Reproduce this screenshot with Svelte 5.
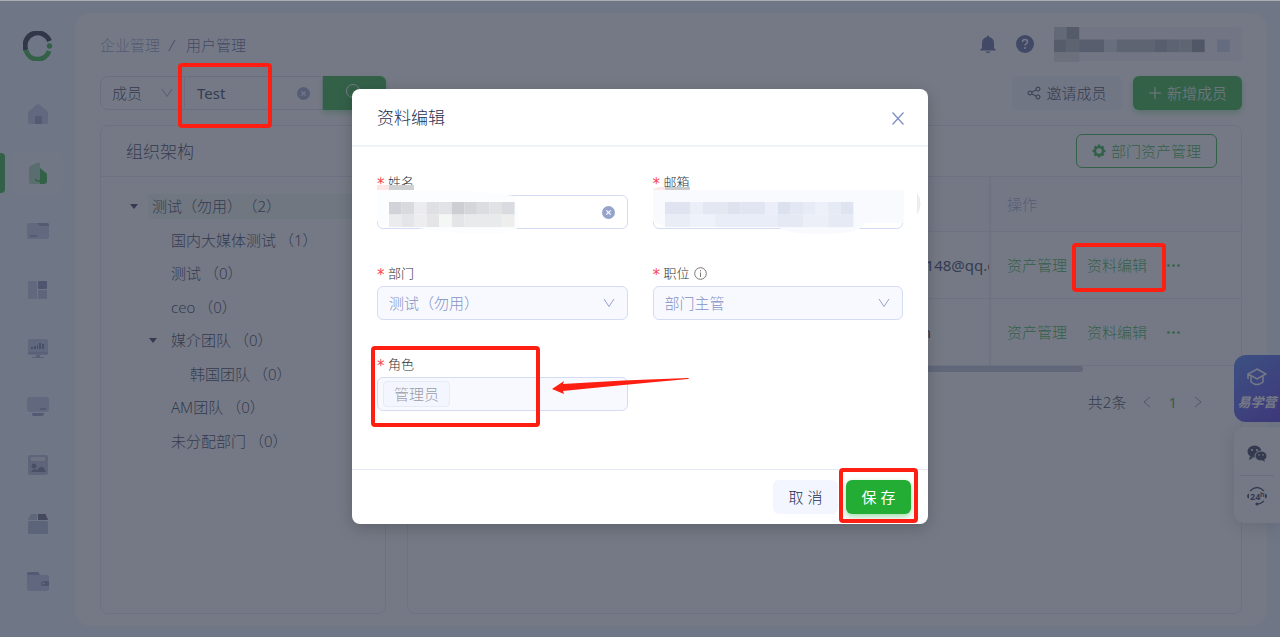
<script lang="ts">
	type Node = { name: string; count: number; level: number; open?: boolean; active?: boolean };
	type Block = [number, number, number, string];

	const tree: Node[] = [
		{ name: '测试（勿用）', count: 2, level: 0, open: true, active: true },
		{ name: '国内大媒体测试', count: 1, level: 1 },
		{ name: '测试', count: 0, level: 1 },
		{ name: 'ceo', count: 0, level: 1 },
		{ name: '媒介团队', count: 0, level: 1, open: true },
		{ name: '韩国团队', count: 0, level: 2 },
		{ name: 'AM团队', count: 0, level: 1 },
		{ name: '未分配部门', count: 0, level: 1 }
	];

	const menu = ['首页', '企业', '项目', '看板', '数据', '设备', '素材', '资产', '钱包'];
	const emails = ['0148@qq.c', 'm'];

	// column, row, width in cells, colour
	const userBlocks: Block[] = [
		[0, 0, 1, '#c3c9cc'], [1, 0, 1, '#949ba2'],
		[0, 1, 1, '#989ea4'], [1, 1, 1, '#b0b5bc'], [2, 1, 2, '#a0a5b2'], [4, 1, 1, '#d8dbe6'],
		[5, 1, 3, '#b4b9c0'], [8, 1, 1, '#9fa5b2'], [9, 1, 1, '#b0b5c0'], [10, 1, 1, '#b8bdc6'],
		[11, 1, 1, '#888d9b'], [13, 1, 1, '#ccd3ec'],
		[0, 2, 2, '#dcdfe2']
	];
	const nameBlocks: Block[] = [
		[0, 0, 1, '#d2d3d8'], [1, 0, 1, '#d9dade'], [2, 0, 1, '#ececef'], [3, 0, 1, '#dfe0e3'],
		[4, 0, 1, '#e1e3e7'], [5, 0, 1, '#cdced3'], [6, 0, 1, '#d5d6da'], [7, 0, 1, '#dcdde0'],
		[8, 0, 1, '#e0e2e4'], [9, 0, 1, '#dadbe0'],
		[0, 1, 1, '#ebecee'], [1, 1, 1, '#e4e5e8'], [2, 1, 1, '#ededf0'], [3, 1, 1, '#e5e5e8'],
		[4, 1, 1, '#f5f7f5'], [5, 1, 1, '#e4e5e7'], [6, 1, 3, '#e9eaec'], [9, 1, 1, '#eeeeed']
	];
	const mailBlocks: Block[] = [
		[0, 0, 2, '#dfe4f0'], [2, 0, 1, '#ebeff8'], [3, 0, 2, '#e2e7f2'], [5, 0, 1, '#dde2ee'],
		[6, 0, 2, '#e1e5f1'], [8, 0, 1, '#ebeef8'], [9, 0, 1, '#dbe1ee'], [10, 0, 1, '#e2e7f3'],
		[11, 0, 1, '#e7ebf6'], [12, 0, 1, '#edf0f9'], [13, 0, 1, '#e6eaf5'], [14, 0, 1, '#dfe4f1'],
		[0, 1, 2, '#e9edf6'], [2, 1, 2, '#eef2fb'], [4, 1, 5, '#e9edf7'], [9, 1, 2, '#e5e9f4'],
		[11, 1, 2, '#eceff8'], [13, 1, 2, '#e6eaf5']
	];

	let keyword = $state('Test');
</script>

{#snippet mosaic(blocks: Block[], x: number, y: number)}
	{#each blocks as [col, row, span, fill]}
		<rect x={x + col * 12.55} y={y + row * 12.5} width={span * 12.55 + 0.1} height="12.6" {fill} />
	{/each}
{/snippet}

{#snippet chevron()}
	<svg class="chevron" viewBox="0 0 12 12" aria-hidden="true"><path d="M1 2l5 7.500 5-7.500" /></svg>
{/snippet}

{#snippet clear()}
	<svg class="clear" viewBox="0 0 12 12" aria-hidden="true">
		<circle cx="6" cy="6" r="6" /><path d="M4 4l4 4M8 4l-4 4" />
	</svg>
{/snippet}

<div class="page">
	<aside>
		<svg class="logo" viewBox="0 0 30 30" aria-label="logo">
			<path d="M2.900 19A12.100 12.100 0 0 1 26.500 10" stroke="#1b2138" />
			<path d="M2.900 19a12.100 12.100 0 0 0 23.200 1" stroke="#23ad34" />
			<circle cx="26.500" cy="15" r="2.700" fill="#23ad34" />
		</svg>
		<nav>
			{#each menu as label, i}
				<a href="#{i}" class:active={i === 1} aria-label={label}>
					<svg viewBox="0 0 22 22">
						{#if i === 0}
							<path d="M11 1Q12 1 13 2l7 6q1 1 1 2v9q0 2-2 2H3q-2 0-2-2v-9q0-1 1-2l7-6q1-1 2-1z" fill="#c0c9ec" />
							<path d="M8 14q0-1 1-1h5q1 0 1 1v7H8z" fill="#8c98c2" />
						{:else if i === 1}
							<path d="M13 6l5 4q2 1 2 3v6q0 3-3 3h-4z" fill="#23ad34" />
							<path d="M2 6q0-1 1-2l8-3.500q2-.500 2 1V22H4q-2 0-2-2z" fill="#a6d9b4" />
							<path d="M8 17q3 4 8 1" fill="none" stroke="#23ad34" stroke-width="1.500" />
						{:else if i === 2}
							<rect y="3" width="22" height="16" rx="2" fill="#c0c9ec" />
							<path d="M10 3h10q2 0 2 2v1h-9z" fill="#9099bc" /><path d="M3 15h7v2H3z" fill="#8c98c2" />
						{:else if i === 3}
							<rect x="1" y="2" width="9" height="18" rx="1" fill="#c0c9ec" />
							<rect x="11" y="2" width="9" height="8" rx="1" fill="#7c89b5" />
							<rect x="11" y="11" width="9" height="9" rx="1" fill="#b6bee0" />
						{:else if i === 4}
							<rect x="1" y="2" width="20" height="16" rx="2" fill="#bac5e4" />
							<path d="M1 15h20v2H1zM9 18h4v2H9zM5 20h12v1H5z" fill="#a0acd2" />
							<path d="M4 10h2v2H4zM7 9h2v3H7zM10 8h1v4h-1zM12 6h2v6h-2zM15 7h2v5h-2z" fill="#6874a0" />
						{:else if i === 5}
							<rect y="2" width="22" height="15" rx="3" fill="#bec8ec" />
							<path d="M13 13h6v2h-6zM5 18h12q0 3-2 3H6q-1 0-1-3z" fill="#8c97c0" />
						{:else if i === 6}
							<rect x="1" y="1" width="20" height="20" rx="2" fill="#b2bddb" />
							<rect x="4" y="3" width="14" height="4" rx="1" fill="#e0e7f6" />
							<circle cx="7" cy="12" r="2.500" fill="#6a7697" /><path d="M4 18q2-4 6-2l3-3q2-1 4 1l2 4z" fill="#6a7697" />
						{:else if i === 7}
							<rect x="1" y="9" width="20" height="13" rx="1.500" fill="#a9b9d6" />
							<path d="M4 2h6v6H1l2-5z" fill="#b4c4dc" /><path d="M11 2h7q1 0 1 1l2 5H11z" fill="#5a5f7e" />
						{:else}
							<path d="M0 3q0-2 2-2h9l2 3H0z" fill="#8c97c0" />
							<path d="M0 4h20q2 0 2 2v12q0 2-2 2H2q-2 0-2-2z" fill="#b9c4e8" />
							<path d="M22 10v5h-6q-2 0-2-2.500t2-2.500z" fill="#7986b0" /><circle cx="16.500" cy="12.500" r="1" fill="#dfe5f6" />
						{/if}
					</svg>
				</a>
			{/each}
		</nav>
	</aside>

	<main>
		<header>
			<div class="crumbs"><a href="#org">企业管理</a><i>/</i><span>用户管理</span></div>
			<div class="user">
				<svg class="bell" viewBox="0 0 16 18"><path d="M7 1q1-1 2 0v1q5 1 5 6v5l2 2v.500H0V15l2-2V8q0-5 5-6zM5.500 16.500h5Q10 18 8 18t-2.500-1.500z" /></svg>
				<svg class="help" viewBox="0 0 18 18">
					<circle cx="9" cy="9" r="9" /><path d="M6.500 7q0-2.500 2.500-2.500T11.500 7c0 1.500-2.500 1.800-2.500 3.600" />
					<circle class="dot" cx="9" cy="13" r="1" />
				</svg>
				<svg class="profile" viewBox="0 0 188 35">
					<rect width="188" height="34" rx="5" fill="#f0f2fa" />
					{@render mosaic(userBlocks, 0, 0)}
				</svg>
			</div>
		</header>

		<div class="toolbar">
			<div class="search">
				<div class="kind">
					<select aria-label="搜索类型"><option>成员</option></select>
					{@render chevron()}
				</div>
				<div class="keyword">
					<input type="text" aria-label="关键词" bind:value={keyword} />
					{@render clear()}
				</div>
				<button class="go" aria-label="搜索">
					<svg viewBox="0 0 18 18"><circle cx="7" cy="7" r="6.500" /><path d="M12 12l5 5" /></svg>
				</button>
			</div>
			<button class="invite">
				<svg viewBox="0 0 14 14"><circle cx="3" cy="7" r="2" /><circle cx="11" cy="3" r="2" /><circle cx="11" cy="11" r="2" /><path d="M5 6l4-2M5 8l4 2" /></svg>
				邀请成员
			</button>
			<button class="add">
				<svg viewBox="0 0 14 14"><path d="M7 1v12M1 7h12" /></svg>
				新增成员
			</button>
		</div>

		<div class="cards">
			<section class="card org">
				<h2>组织架构</h2>
				<ul>
					{#each tree as node}
						<li class="level-{node.level}">
							<span class="caret" class:open={node.open}></span>
							<span class="node" class:active={node.active}>{node.name}<b>（{node.count}）</b></span>
						</li>
					{/each}
				</ul>
			</section>

			<section class="card members">
				<div class="card-head">
					<button class="dept">
						<svg viewBox="0 0 14 14">
							<circle cx="7" cy="7" r="4" />
							<path d="M7 3V.500M7 11v2.500M3 7H.500M11 7h2.500M4.200 4.200L2.500 2.500M9.800 4.200l1.700-1.700M4.200 9.800l-1.700 1.700M9.800 9.800l1.700 1.700" />
						</svg>
						部门资产管理
					</button>
				</div>
				<table>
					<thead>
						<tr><th></th><th></th><th class="fixed">操作</th></tr>
					</thead>
					<tbody>
						{#each emails as email}
							<tr>
								<td></td>
								<td class="email">{email}</td>
								<td class="fixed">
									<div class="actions">
										<a href="#asset">资产管理</a>
										<a href="#edit">资料编辑</a>
										<a href="#more" aria-label="更多"><svg viewBox="0 0 13 3"><circle cx="1.500" cy="1.500" r="1.300" /><circle cx="6.500" cy="1.500" r="1.300" /><circle cx="11.500" cy="1.500" r="1.300" /></svg></a>
									</div>
								</td>
							</tr>
						{/each}
					</tbody>
				</table>
				<div class="scroll"></div>
				<div class="pager">
					<span>共2条</span>
					<button aria-label="上一页"><svg viewBox="0 0 8 12"><path d="M7 1L1 6l6 5" /></svg></button>
					<button class="current">1</button>
					<button aria-label="下一页"><svg viewBox="0 0 8 12"><path d="M1 1l6 5-6 5" /></svg></button>
				</div>
			</section>
		</div>
	</main>

	<div class="float">
		<a class="school" href="#school">
			<svg viewBox="0 0 20 18"><path d="M10 1l9 5-9 5-9-5zM4 8v6q6 5 12 0V8M1 6v5" /></svg>
			<em>易学营</em>
		</a>
		<div class="contact">
			<a href="#wechat" aria-label="微信">
				<svg viewBox="0 0 20 18">
					<ellipse cx="7.500" cy="6.500" rx="7" ry="6" /><path d="M3 11l-1 4 4-2z" />
					<ellipse cx="14" cy="11" rx="6" ry="5" stroke="#fff" /><path d="M15 15l3 2-1-3z" />
					<g fill="#fff"><circle cx="5" cy="5" r="1" /><circle cx="10" cy="5" r="1" /><circle cx="12" cy="10" r=".8" /><circle cx="16" cy="10" r=".8" /></g>
				</svg>
			</a>
			<a href="#service" aria-label="客服">
				<svg viewBox="0 0 20 20">
					<path d="M3 5q7-7 14 0M17 15q-3 3-7 3" fill="none" stroke="#26304f" stroke-width="1.300" />
					<path d="M0 10q0-2 2-2.500v5q-2-.500-2-2.500zM20 10q0-2-2-2.500v5q2-.500 2-2.500z" /><circle cx="10" cy="18" r="1.600" />
					<text x="3" y="13.500">24</text><text class="hour" x="13" y="10.500">h</text>
				</svg>
			</a>
		</div>
	</div>

	<div class="mask">
		<div class="mark mark-search"></div>
		<div class="mark mark-edit"></div>

		<form class="modal" role="dialog" aria-label="资料编辑">
			<div class="modal-head">
				<h1>资料编辑</h1>
				<button type="button" aria-label="关闭"><svg viewBox="0 0 12 13"><path d="M.500.500l11 12M11.500.500l-11 12" /></svg></button>
			</div>
			<div class="fields">
				<div class="field">
					<label for="name">姓名</label>
					<div class="control">
						<input id="name" type="text" />
						{@render clear()}
						<svg class="veil" viewBox="0 0 280 56">
							<path d="M0 6h60q50 1 76 6 9 16 5 32-16 8-40 6-30-1-60-6l-35-3-6-4z" fill="#fcfdfe" />
							<path d="M0 1h12v5H0z" fill="#fde6e6" /><path d="M12 1h25v5H12z" fill="#cfd0d1" />
							{@render mosaic(nameBlocks, 12, 18)}
						</svg>
					</div>
				</div>
				<div class="field">
					<label for="mail">邮箱</label>
					<div class="control">
						<input id="mail" type="text" />
						<svg class="veil" viewBox="0 0 280 56">
							<path d="M0 6h251v33H212q-2 10-40 11-42 0-48-8L16 43 0 38z" fill="#f8fafe" />
							<path d="M0 5q8-3 12-2v3H0z" fill="#fde6e6" /><path d="M12 3h25v3H12z" fill="#c8c9ca" />
							<path d="M264 8q7 12 0 23z" fill="#eceded" />
							{@render mosaic(mailBlocks, 12, 18)}
						</svg>
					</div>
				</div>
				<div class="field">
					<label for="dept">部门</label>
					<div class="control">
						<select id="dept" disabled><option>测试（勿用）</option></select>
						{@render chevron()}
					</div>
				</div>
				<div class="field">
					<label for="post">职位
						<svg class="info" viewBox="0 0 13 13"><circle cx="6.500" cy="6.500" r="5.800" /><path d="M6.500 5.500v4.500M6.500 3.200v1.200" /></svg>
					</label>
					<div class="control">
						<select id="post" disabled><option>部门主管</option></select>
						{@render chevron()}
					</div>
				</div>
				<div class="field">
					<label for="role">角色</label>
					<div class="control tags">
						<span class="tag">管理员</span>
						<input id="role" type="text" disabled />
					</div>
				</div>
			</div>
			<div class="modal-foot">
				<button type="button" class="cancel">取 消</button>
				<button type="button" class="save">保 存</button>
			</div>
			<div class="mark mark-role"></div>
			<div class="mark mark-save"></div>
			<svg class="arrow" viewBox="0 0 138 20"><path d="M0 12L12 4l-1 3Q70 3 136 1q2 1 0 1Q80 7 11 14l1 3z" /></svg>
		</form>
	</div>
</div>

<style>
	:global(body) {
		margin: 0;
	}
	.page {
		position: relative;
		display: flex;
		min-height: 100vh;
		box-sizing: border-box;
		border-top: 1px solid #a9adaf;
		background: #ebf4ff;
		color: #26304f;
		font: 300 15px/22px 'Noto Sans', 'Noto Sans CJK SC', sans-serif;
	}
	.page :global(*) {
		box-sizing: border-box;
	}
	svg {
		display: block;
		flex-shrink: 0;
		fill: none;
		stroke-width: 1;
	}
	a {
		color: inherit;
		text-decoration: none;
	}
	button,
	input,
	select {
		font: inherit;
		color: inherit;
		border: 0;
		padding: 0;
		margin: 0;
		background: none;
	}
	select {
		appearance: none;
	}
	h1,
	h2 {
		margin: 0;
		font-size: 17px;
		font-weight: 300;
	}
	aside {
		width: 75px;
		flex-shrink: 0;
		padding-top: 30px;
	}
	.logo {
		width: 30px;
		height: 30px;
		margin: 0 auto 24px;
		stroke-width: 5;
	}
	nav {
		display: grid;
		grid-template-rows: repeat(9, 1fr);
		height: 526px;
	}
	nav a {
		position: relative;
		display: grid;
		place-items: center;
		width: 51px;
		height: 42px;
		margin: auto;
		border-radius: 8px;
	}
	nav a.active {
		background: #f3f9ff;
	}
	nav a.active::before {
		content: '';
		position: absolute;
		left: -12px;
		width: 5px;
		height: 40px;
		border-radius: 0 4px 4px 0;
		background: #23ad34;
	}
	nav svg {
		width: 22px;
		height: 22px;
	}
	main {
		flex: 1;
		min-width: 0;
		display: flex;
		flex-direction: column;
		margin: 12px 13px 11px 0;
		padding: 12px 25px;
		border-radius: 16px;
		background: #fff;
	}
	header,
	.user,
	.crumbs,
	.toolbar,
	.search,
	.pager {
		display: flex;
		align-items: center;
	}
	header {
		justify-content: space-between;
		height: 38px;
		margin-bottom: 13px;
	}
	.crumbs {
		padding-top: 2px;
	}
	.crumbs a {
		color: #8e9ac4;
	}
	.crumbs span {
		color: #54618f;
	}
	.crumbs i {
		margin: 0 12px 0 9px;
		color: #54618f;
	}
	.bell {
		width: 16px;
		height: 18px;
		margin-right: 20px;
		fill: #52609a;
	}
	.help {
		width: 18px;
		height: 18px;
		margin-right: 20px;
		fill: #52609a;
	}
	.help path {
		fill: none;
		stroke: #fff;
		stroke-width: 1.500;
	}
	.help .dot {
		fill: #fff;
	}
	.profile {
		width: 188px;
		height: 35px;
	}
	.toolbar {
		height: 34px;
		margin-bottom: 15px;
	}
	.search {
		margin-right: auto;
	}
	.kind,
	.keyword {
		display: flex;
		align-items: center;
		justify-content: space-between;
		height: 34px;
		padding: 0 12px;
		border: 1px solid #d5dcf2;
	}
	.kind {
		width: 85px;
		padding: 0 11px;
		border-radius: 8px 0 0 8px;
	}
	.kind select {
		width: 40px;
	}
	.keyword {
		width: 138px;
		border-left: 0;
	}
	.keyword input {
		width: 80px;
		font-weight: 400;
	}
	.chevron {
		width: 12px;
		height: 12px;
		stroke: #96a3cc;
	}
	.clear {
		width: 13px;
		height: 13px;
		fill: #96a3cc;
		stroke: #fff;
	}
	.clear circle {
		stroke: none;
	}
	.toolbar button,
	.dept {
		display: flex;
		align-items: center;
		justify-content: center;
		gap: 5px;
		height: 34px;
		border-radius: 6px;
	}
	.toolbar .go {
		width: 63px;
		border-radius: 0 6px 6px 0;
		background: #23ad34;
		box-shadow: 0 3px 6px #23ad3466;
	}
	.go svg {
		width: 18px;
		height: 18px;
		stroke: #fff;
	}
	.toolbar .invite {
		width: 110px;
		margin-right: 11px;
		background: #f1f4fe;
	}
	.invite svg,
	.add svg,
	.dept svg {
		width: 14px;
		height: 14px;
		stroke: currentColor;
	}
	.toolbar .add {
		width: 109px;
		color: #fff;
		background: #23ad34;
		box-shadow: 0 3px 6px #23ad3466;
	}
	.cards {
		flex: 1;
		display: flex;
		gap: 21px;
	}
	.card {
		border: 1px solid #e1e6f5;
		border-radius: 8px;
	}
	.org {
		width: 286px;
	}
	.org h2 {
		height: 51px;
		padding-left: 25px;
		line-height: 51px;
		border-bottom: 1px solid #e1e6f5;
	}
	ul {
		display: grid;
		grid-template-rows: repeat(8, 1fr);
		height: 268px;
		margin: 13px 0 0;
		padding: 0;
		list-style: none;
	}
	li {
		display: flex;
		align-items: center;
		padding-left: 29px;
	}
	.level-1 {
		padding-left: 48px;
	}
	.level-2 {
		padding-left: 67px;
	}
	.caret {
		width: 8px;
		margin-right: 10px;
	}
	.caret.open {
		border: 4px solid transparent;
		border-top: 5px solid #26304f;
		border-bottom: 0;
	}
	.node {
		flex: 1;
		padding-left: 4px;
		line-height: 25px;
		white-space: nowrap;
	}
	.node b {
		margin-left: 3px;
		font-weight: 300;
	}
	.node.active {
		background: #edf7f2;
	}
	.node.active b {
		margin-left: 8px;
	}
	.members {
		flex: 1;
		min-width: 0;
	}
	.card-head {
		display: flex;
		justify-content: flex-end;
		align-items: center;
		height: 51px;
		padding-right: 24px;
		border-bottom: 1px solid #e1e6f5;
	}
	.dept {
		width: 141px;
		border: 1px solid #23ad34;
		color: #23ad34;
	}
	.dept circle,
	.dept path {
		stroke-width: 2.500;
	}
	table {
		width: 100%;
		table-layout: fixed;
		border-spacing: 0;
		text-align: left;
	}
	th,
	td {
		height: 67px;
		padding: 0;
		border-bottom: 1px solid #e4e8f4;
		overflow: hidden;
		white-space: nowrap;
	}
	th {
		height: 55px;
		font-weight: 300;
		color: #96a3cc;
		background: #fbfcff;
	}
	th:nth-child(2) {
		width: 72px;
	}
	.email {
		font-weight: 400;
	}
	.fixed {
		width: 252px;
		padding-left: 17px;
		border-left: 1px solid #e4e8f4;
		box-shadow: inset 4px 0 4px -4px #dbe0ee;
	}
	.actions {
		display: flex;
		align-items: center;
		gap: 20px;
		color: #23ad34;
	}
	.actions svg {
		width: 13px;
		height: 3px;
		fill: #23ad34;
	}
	.scroll {
		width: 81%;
		height: 6px;
		border-radius: 0 3px 3px 0;
		background: #bcc3d8;
	}
	.pager {
		justify-content: flex-end;
		gap: 17px;
		margin-top: 19px;
		padding-right: 39px;
	}
	.pager svg {
		width: 8px;
		height: 12px;
		stroke: #7e8bb5;
	}
	.pager .current {
		color: #23ad34;
		font-weight: 400;
	}
	.float {
		position: absolute;
		top: 354px;
		right: 0;
		width: 46px;
	}
	.school {
		display: flex;
		flex-direction: column;
		align-items: center;
		gap: 5px;
		height: 67px;
		padding-top: 13px;
		margin-bottom: 5px;
		border-radius: 12px 0 0 12px;
		color: #fff;
		background: linear-gradient(140deg, #3f78f4, #4a26dc);
	}
	.school svg {
		width: 20px;
		height: 18px;
		stroke: #fff;
		stroke-width: 1.500;
	}
	.school em {
		font-size: 13px;
		font-weight: 700;
	}
	.contact {
		display: flex;
		flex-direction: column;
		align-items: center;
		height: 96px;
		padding: 5px 6px 0;
		border-radius: 10px 0 0 10px;
		background: #fff;
		box-shadow: 0 4px 20px #00000030;
	}
	.contact a {
		display: grid;
		place-items: center;
		width: 34px;
		height: 43px;
	}
	.contact a + a {
		height: 41px;
		border-top: 1px solid #d5dcf2;
	}
	.contact svg {
		width: 20px;
		height: 20px;
		fill: #26304f;
	}
	.contact text {
		font-size: 9px;
		font-weight: 700;
	}
	.contact .hour {
		font-size: 7px;
	}
	.mask {
		position: absolute;
		inset: 0;
		display: flex;
		justify-content: center;
		align-items: flex-start;
		padding-top: 88px;
		background: rgba(58, 64, 81, 0.7);
	}
	.modal {
		position: relative;
		width: 576px;
		border-radius: 8px;
		background: #fff;
		box-shadow: 0 4px 16px #00000033;
	}
	.modal-head {
		display: flex;
		align-items: center;
		justify-content: space-between;
		height: 58px;
		padding: 2px 24px 0 25px;
		border-bottom: 2px solid #f0f2fa;
	}
	.modal-head svg {
		width: 12px;
		height: 13px;
		stroke: #7e8fc4;
		stroke-width: 1.300;
	}
	.fields {
		display: grid;
		grid-template-columns: 1fr 1fr;
		gap: 31px 25px;
		padding: 22px 25px 58px;
	}
	label {
		display: flex;
		align-items: center;
		height: 26px;
		font-size: 13px;
		color: #333;
	}
	label::before {
		content: '*';
		width: 11px;
		padding-top: 5px;
		color: #f5474f;
		font: 15px/15px 'DejaVu Sans', sans-serif;
	}
	.info {
		width: 13px;
		height: 13px;
		margin-left: 4px;
		stroke: #777;
	}
	.control {
		position: relative;
		display: flex;
		align-items: center;
		height: 34px;
	}
	.control input,
	.control select {
		width: 100%;
		height: 34px;
		padding: 0 11px;
		border: 1px solid #d3dcf3;
		border-radius: 6px;
	}
	.control select:disabled {
		background: #f8f9ff;
		color: #8493c4;
		opacity: 1;
	}
	.control .chevron,
	.control .clear {
		position: absolute;
		right: 13px;
	}
	.veil {
		position: absolute;
		left: 0;
		top: -11px;
		width: 280px;
		height: 56px;
		pointer-events: none;
	}
	.tags {
		padding-left: 5px;
		border: 1px solid #d3dcf3;
		border-radius: 6px;
		background: #f8f9ff;
	}
	.tags input {
		flex: 1;
		min-width: 0;
		height: 24px;
		border: 0;
	}
	.tag {
		padding: 0 10px;
		line-height: 24px;
		border: 1px solid #e6ebf8;
		border-radius: 4px;
		background: #f3f6ff;
		color: #999da6;
		white-space: nowrap;
	}
	.modal-foot {
		display: flex;
		justify-content: flex-end;
		gap: 8px;
		padding: 10px 17px;
		border-top: 1px solid #e6e9f8;
	}
	.modal-foot button {
		width: 65px;
		height: 34px;
		border-radius: 6px;
		background: #f3f6ff;
	}
	.modal-foot .save {
		color: #fff;
		font-weight: 400;
		background: #23ad34;
		box-shadow: 0 3px 6px #23ad3466;
	}
	.mark {
		position: absolute;
		border: 4px solid #fe1f12;
		border-radius: 4px;
		pointer-events: none;
	}
	.mark-search {
		left: 178px;
		top: 62px;
		width: 94px;
		height: 65px;
	}
	.mark-edit {
		right: 114px;
		top: 242px;
		width: 94px;
		height: 49px;
	}
	.mark-role {
		left: 19px;
		top: 257px;
		width: 169px;
		height: 81px;
	}
	.mark-save {
		right: 10px;
		bottom: 1px;
		width: 79px;
		height: 55px;
	}
	.arrow {
		position: absolute;
		left: 200px;
		top: 288px;
		width: 138px;
		height: 20px;
		fill: #fe1f12;
	}
</style>
